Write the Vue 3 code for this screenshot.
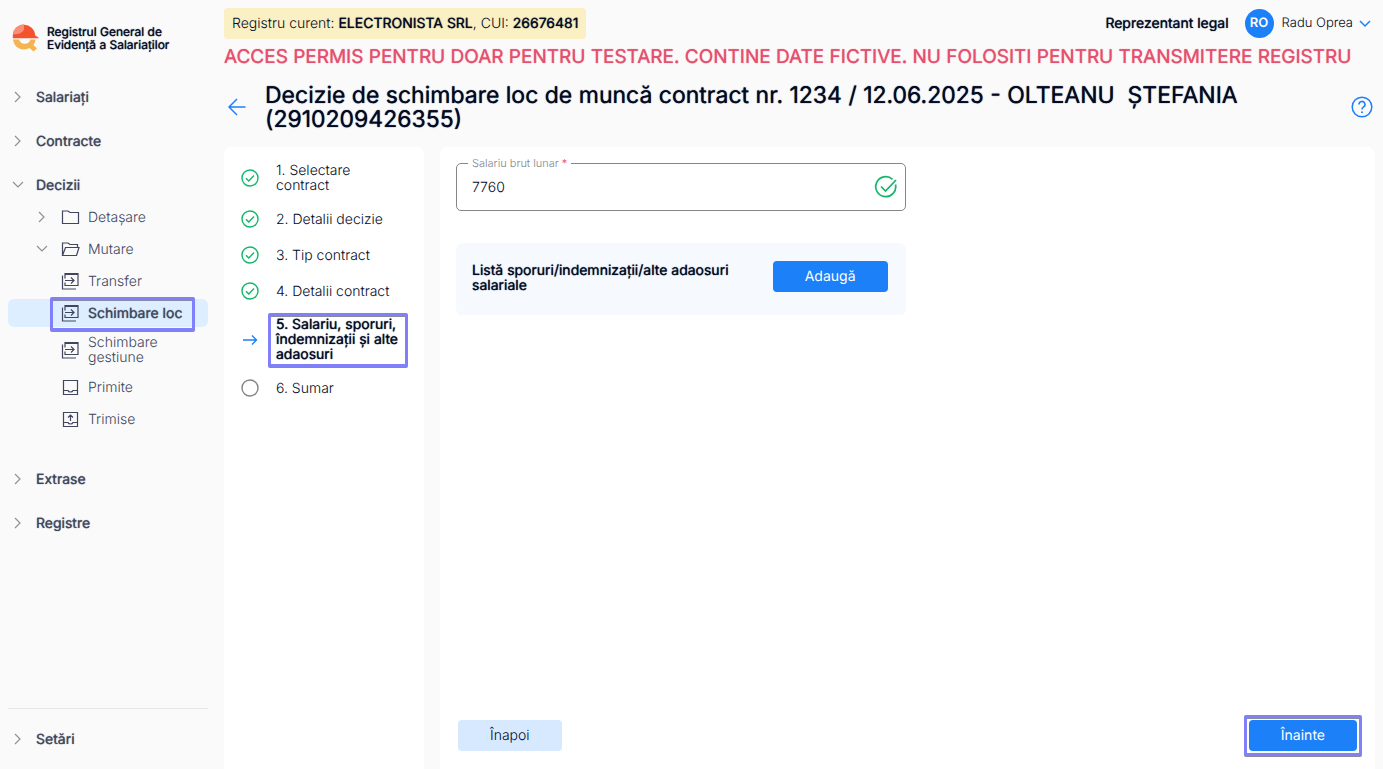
<script setup>
import { ref } from 'vue'

const salary = ref('7760')

const menuTop = [
  { label: 'Salariați', open: false },
  { label: 'Contracte', open: false },
  {
    label: 'Decizii',
    open: true,
    children: [
      { label: 'Detașare', icon: 'folder', arrow: 'right' },
      { label: 'Mutare', icon: 'folderOpen', arrow: 'down' },
      { label: 'Transfer', icon: 'transfer' },
      { label: 'Schimbare loc', icon: 'transfer', active: true },
      { label: 'Schimbare gestiune', icon: 'transfer' },
      { label: 'Primite', icon: 'inbox' },
      { label: 'Trimise', icon: 'outbox' }
    ]
  },
  { label: 'Extrase', open: false },
  { label: 'Registre', open: false }
]

const icons = {
  folder: 'M1.5 3v12.500h16v-11h-8.500l-2-1.500z',
  folderOpen: 'M1.500 15.500v-12.500h5.500l2 1.500h7.500v2.500M1.500 15.500l3-8h13.500l-2.500 8z',
  inbox: 'M2.500 2.500h14v14h-14zM2.500 12.500h4.500q.5 1.500 2.500 1.500t2.500-1.500h4.500',
  outbox: 'M2.500 2.500h14v14h-14zM2.500 12.500h4.500q.5 1.500 2.500 1.500t2.500-1.500h4.500M9.500 11v-6M7 7.500l2.500-2.500l2.500 2.500',
  transfer: 'M4 6.500v-5h13v12h-13v-3M4 2.500h13M1.500 3.500v13.500h13.500M4 8.500h9M10 5.500l3 3l-3 3'
}

const steps = [
  { label: '1. Selectare contract', state: 'done' },
  { label: '2. Detalii decizie', state: 'done' },
  { label: '3. Tip contract', state: 'done' },
  { label: '4. Detalii contract', state: 'done' },
  { label: '5. Salariu, sporuri, îndemnizații și alte adaosuri', state: 'current' },
  { label: '6. Sumar', state: 'todo' }
]
</script>

<template>
  <div class="layout">
    <aside class="sidebar">
      <a href="#" class="brand">
        <svg width="28" height="28" viewBox="0 0 28 28">
          <path d="M1 15.500a11 11 0 0 0 16.500 8.500l4 3.500l3.500-3l-3.500-3.500a10 10 0 0 0 2-5.500h-5a6 6 0 0 1-11.500 0z" fill="#f6b352" />
          <path d="M.8 14.300v-2a11.200 11.200 0 0 1 22.400-.8l3.300 2v.8z" fill="#f5532d" />
          <path d="M.8 10.500a11.200 11.200 0 0 1 11.200-10.200v5q-1 5-11.200 5.200z" fill="#f88f78" />
        </svg>
        <span class="strong">Registrul General de<br>Evidență a Salariaților</span>
      </a>
      <nav class="menu">
        <template v-for="item in menuTop" :key="item.label">
          <button type="button" class="menu-item strong">
            <svg class="chevron" width="12" height="12" viewBox="0 0 12 12">
              <path :d="item.open ? 'M1 3l5 5l5-5' : 'M3 1l5 5l-5 5'" />
            </svg>
            {{ item.label }}
          </button>
          <div v-if="item.children" class="submenu">
            <a v-for="child in item.children" :key="child.label" href="#" class="sub-item" :class="{ active: child.active, strong: child.active }">
              <span class="sub-arrow">
                <svg v-if="child.arrow" class="chevron" width="12" height="12" viewBox="0 0 12 12">
                  <path :d="child.arrow === 'down' ? 'M1 3l5 5l5-5' : 'M3 1l5 5l-5 5'" />
                </svg>
              </span>
              <svg class="sub-icon" width="19" height="19" viewBox="0 0 19 19">
                <path :d="icons[child.icon]" />
              </svg>
              <span class="sub-label">{{ child.label }}</span>
              <span v-if="child.active" class="mark mark-menu"></span>
            </a>
          </div>
        </template>
      </nav>
      <div class="sidebar-foot">
        <button type="button" class="menu-item strong">
          <svg class="chevron" width="12" height="12" viewBox="0 0 12 12"><path d="M3 1l5 5l-5 5" /></svg>
          Setări
        </button>
      </div>
    </aside>

    <main class="main">
      <header class="topbar">
        <div class="registry">Registru curent: <b class="strong">ELECTRONISTA SRL</b>, CUI: <b class="strong">26676481</b></div>
        <div class="user">
          <span class="role strong">Reprezentant legal</span>
          <span class="avatar">RO</span>
          <button type="button" class="user-menu">
            Radu Oprea
            <svg width="12" height="12" viewBox="0 0 12 12"><path d="M1 3l5 5l5-5" /></svg>
          </button>
        </div>
      </header>
      <div class="warning strong">ACCES PERMIS PENTRU DOAR PENTRU TESTARE. CONTINE DATE FICTIVE. NU FOLOSITI PENTRU TRANSMITERE REGISTRU</div>

      <div class="title-row">
        <button type="button" class="icon-button" aria-label="Înapoi la listă">
          <svg width="18" height="18" viewBox="0 0 18 18"><path d="M17.500 9h-16M9 1l-8 8l8 8" /></svg>
        </button>
        <h1 class="strong">Decizie de schimbare loc de muncă contract nr. 1234 / 12.06.2025 - OLTEANU&nbsp; ȘTEFANIA (2910209426355)</h1>
        <button type="button" class="icon-button" aria-label="Ajutor">
          <svg width="22" height="22" viewBox="0 0 22 22">
            <circle cx="11" cy="11" r="9.800" />
            <path d="M8 8.500a3 3 0 1 1 4.300 2.600q-1.300.8-1.300 2.300" />
            <circle class="dot" cx="11" cy="16.300" r="1" />
          </svg>
        </button>
      </div>

      <div class="panels">
        <section class="steps">
          <ol>
            <li v-for="step in steps" :key="step.label" :class="step.state">
              <svg v-if="step.state === 'done'" class="step-icon" width="20" height="20" viewBox="0 0 20 20">
                <circle cx="10" cy="10" r="8" />
                <path d="M6 10.200l2.800 2.800l5.200-5.400" />
              </svg>
              <svg v-else-if="step.state === 'current'" class="step-icon" width="20" height="20" viewBox="0 0 20 20">
                <path d="M3 10h13.500M12 5.500l4.500 4.500l-4.500 4.500" />
              </svg>
              <svg v-else class="step-icon" width="20" height="20" viewBox="0 0 20 20">
                <circle cx="10" cy="10" r="8" />
              </svg>
              <span :class="{ strong: step.state === 'current' }">{{ step.label }}</span>
              <span v-if="step.state === 'current'" class="mark mark-step"></span>
            </li>
          </ol>
        </section>

        <form class="content" @submit.prevent>
          <div class="fields">
            <div class="field">
              <label for="salary">Salariu brut lunar <em>*</em></label>
              <input id="salary" v-model="salary" type="text">
              <svg width="24" height="24" viewBox="0 0 24 24">
                <path d="M18.500 4.300a10 10 0 1 0 3 5.200M7 11.500l4.500 4.500l10.500-11" />
              </svg>
            </div>
            <div class="bonus">
              <span class="bonus-label strong">Listă sporuri/indemnizații/alte adaosuri salariale</span>
              <button type="button" class="btn primary">Adaugă</button>
            </div>
          </div>
          <div class="actions">
            <button type="button" class="btn secondary">Înapoi</button>
            <div class="next">
              <button type="submit" class="btn primary">Înainte</button>
              <span class="mark mark-next"></span>
            </div>
          </div>
        </form>
      </div>
    </main>
  </div>
</template>

<style>
body {
  margin: 0;
  background: #fafafa;
}
</style>

<style scoped>
* {
  box-sizing: border-box;
}

.layout {
  display: flex;
  min-height: 100vh;
  font-family: Inter, "Liberation Sans", sans-serif;
  font-size: 14px;
  font-weight: 300;
  line-height: 15px;
  text-rendering: geometricPrecision;
  color: #030a24;
}

button,
input {
  font: inherit;
  text-rendering: inherit;
  color: inherit;
}

button {
  border: none;
  background: none;
  padding: 0;
  cursor: pointer;
}

a {
  color: inherit;
  text-decoration: none;
}

svg {
  flex: none;
  fill: none;
}

.strong {
  font-weight: 400;
  text-shadow: 0 0 1px currentColor;
}

.sidebar {
  display: flex;
  flex-direction: column;
  flex: none;
  width: 216px;
  padding: 8px;
  color: #41465c;
}

.brand {
  display: flex;
  align-items: center;
  gap: 7px;
  height: 60px;
  padding-left: 4px;
  font-size: 12px;
  line-height: 13px;
  color: #030a24;
}

.menu {
  display: flex;
  flex-direction: column;
  gap: 8px;
  padding-top: 11px;
}

.menu-item {
  display: flex;
  align-items: center;
  gap: 12px;
  width: 100%;
  height: 36px;
  padding-left: 4px;
  text-align: left;
}

.chevron {
  display: block;
  stroke: #909096;
  stroke-width: 1.2;
}

.submenu {
  display: flex;
  flex-direction: column;
  gap: 4px;
  margin-top: -8px;
  padding-bottom: 20px;
}

.sub-item {
  position: relative;
  display: flex;
  align-items: center;
  min-height: 28px;
  padding: 4px 8px 4px 28px;
  border-radius: 6px;
}

.sub-item.active {
  background: #dceeff;
}

.sub-arrow {
  width: 25px;
}

.sub-icon {
  margin-right: 8px;
  stroke: #41465c;
  stroke-width: 1.2;
}

.sub-label {
  width: 104px;
}

.mark {
  position: absolute;
  border: 3px solid #8080fa;
  border-radius: 2px;
  filter: drop-shadow(0 1px 0 #8a8a9c);
  pointer-events: none;
}

.mark-menu {
  inset: -2px 13px -4px 42px;
}

.sidebar-foot {
  margin-top: auto;
  padding: 12px 0 4px;
  border-top: 1px solid #e6e6e8;
}

.main {
  display: flex;
  flex-direction: column;
  flex: 1;
  min-width: 0;
  padding: 8px 8px 0;
}

.topbar {
  display: flex;
  align-items: center;
  justify-content: space-between;
  height: 31px;
}

.registry {
  padding: 8px;
  border-radius: 4px;
  background: #faf0c3;
}

.user {
  display: flex;
  align-items: center;
}

.role {
  margin-right: 16px;
}

.avatar {
  display: flex;
  align-items: center;
  justify-content: center;
  width: 29px;
  height: 29px;
  margin-right: 8px;
  border-radius: 50%;
  background: #1c80f8;
  color: #fff;
  font-size: 13px;
  font-weight: 600;
}

.user-menu {
  display: flex;
  align-items: center;
  gap: 6px;
  padding-right: 4px;
  font-size: 13px;
}

.user-menu svg,
.icon-button svg {
  display: block;
  stroke: #1c80f8;
  stroke-width: 1.5;
}

.icon-button .dot {
  fill: #1c80f8;
  stroke: none;
}

.warning {
  padding: 8px 0;
  font-size: 19px;
  line-height: 20px;
  color: #e5506f;
}

.title-row {
  display: flex;
  align-items: center;
  padding: 8px 2px 16px 4px;
}

h1 {
  flex: 1;
  margin: 0 16px 0 19px;
  font-size: 23px;
  line-height: 24px;
}

.panels {
  display: flex;
  flex: 1;
  gap: 16px;
}

.steps {
  flex: none;
  width: 200px;
  border-radius: 8px 8px 0 0;
  background: #fff;
}

ol {
  display: flex;
  flex-direction: column;
  gap: 16px;
  margin: 0;
  padding: 16px;
  list-style: none;
}

li {
  position: relative;
  display: flex;
  align-items: center;
  gap: 16px;
}

li.done:first-child {
  padding-right: 24px;
}

.step-icon {
  stroke: #12b76a;
  stroke-width: 1.4;
}

.current .step-icon {
  stroke: #1c80f8;
}

.todo .step-icon {
  stroke: #85858a;
}

.mark-step {
  inset: -4px 0 -5px 28px;
}

.content {
  display: flex;
  flex: 1;
  flex-direction: column;
  justify-content: space-between;
  padding: 16px 16px 13px;
  border-radius: 8px 8px 0 0;
  background: #fff;
}

.fields {
  width: 50%;
  padding-right: 2px;
}

.field {
  position: relative;
}

.field label {
  position: absolute;
  top: -7px;
  left: 12px;
  padding: 0 4px;
  background: #fff;
  font-size: 11px;
  color: #85858a;
}

em {
  font-style: normal;
  color: #e5506f;
}

.field input {
  display: block;
  width: 100%;
  height: 48px;
  padding: 0 48px 0 15px;
  border: 1px solid #85858a;
  border-radius: 5px;
  outline: none;
  background: #fff;
}

.field svg {
  position: absolute;
  top: 12px;
  right: 8px;
  stroke: #12b76a;
  stroke-width: 1.7;
}

.bonus {
  display: flex;
  align-items: flex-start;
  justify-content: space-between;
  gap: 16px;
  min-height: 72px;
  margin-top: 32px;
  padding: 18px 18px 18px 16px;
  border-radius: 6px;
  background: #f6faff;
}

.bonus-label {
  width: 270px;
  padding-top: 2px;
}

.btn {
  height: 31px;
  padding: 0 32px;
  border-radius: 4px;
  text-align: center;
}

.primary {
  background: #1c80f8;
  color: #fff;
  font-weight: 400;
}

.secondary {
  background: #d6e9ff;
}

.actions {
  display: flex;
  align-items: center;
  justify-content: space-between;
  padding: 5px 2px;
}

.next {
  position: relative;
}

.mark-next {
  inset: -5px;
}
</style>
